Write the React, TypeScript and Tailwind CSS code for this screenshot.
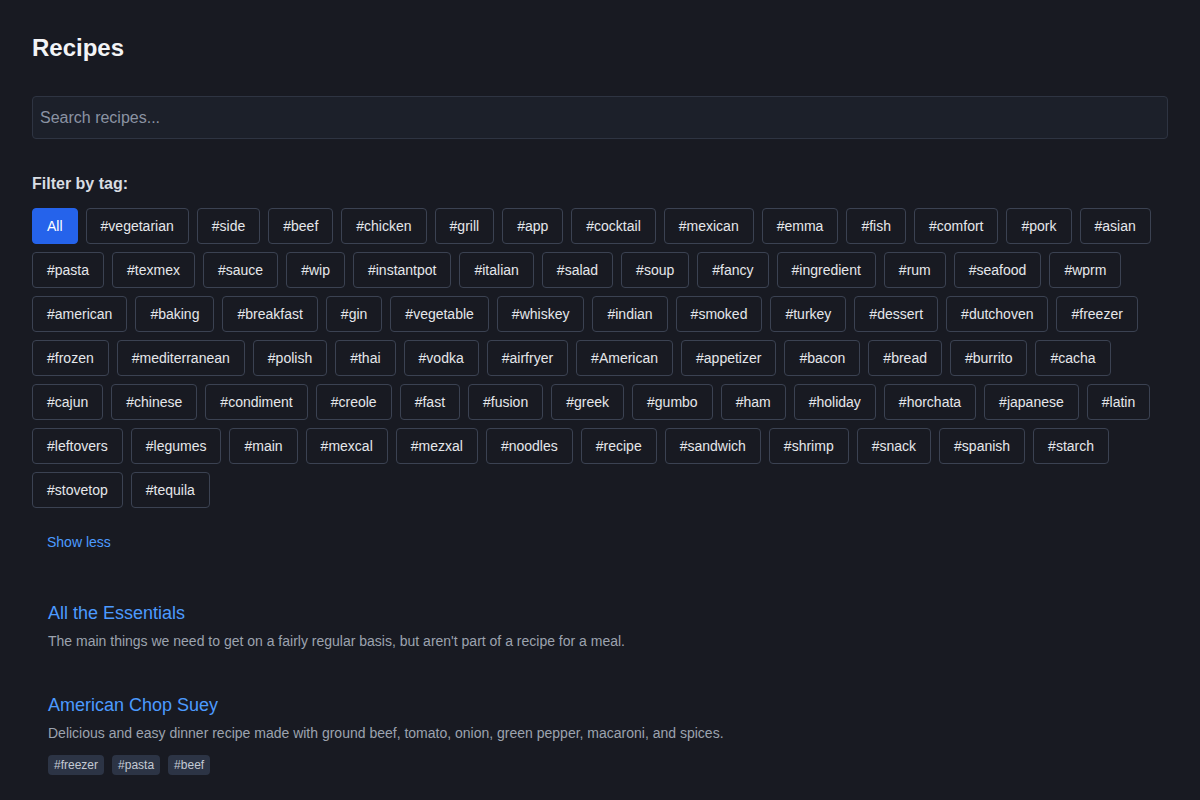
import React from "react";

const tags = [
  "vegetarian", "side", "beef", "chicken", "grill", "app", "cocktail", "mexican", "emma", "fish", "comfort", "pork", "asian",
  "pasta", "texmex", "sauce", "wip", "instantpot", "italian", "salad", "soup", "fancy", "ingredient", "rum", "seafood", "wprm",
  "american", "baking", "breakfast", "gin", "vegetable", "whiskey", "indian", "smoked", "turkey", "dessert", "dutchoven", "freezer",
  "frozen", "mediterranean", "polish", "thai", "vodka", "airfryer", "American", "appetizer", "bacon", "bread", "burrito", "cacha",
  "cajun", "chinese", "condiment", "creole", "fast", "fusion", "greek", "gumbo", "ham", "holiday", "horchata", "japanese", "latin",
  "leftovers", "legumes", "main", "mexcal", "mezxal", "noodles", "recipe", "sandwich", "shrimp", "snack", "spanish", "starch",
  "stovetop", "tequila",
];

const recipes = [
  {
    title: "All the Essentials",
    description: "The main things we need to get on a fairly regular basis, but aren't part of a recipe for a meal.",
    tags: [] as string[],
  },
  {
    title: "American Chop Suey",
    description: "Delicious and easy dinner recipe made with ground beef, tomato, onion, green pepper, macaroni, and spices.",
    tags: ["freezer", "pasta", "beef"],
  },
];

function App() {
  return (
    <div className="min-h-screen bg-[#181a22] px-8 pt-8 font-['Liberation_Sans',Arial,sans-serif] text-[#e5e7eb]">
      <h1 className="text-2xl font-bold text-[#f3f4f6]">Recipes</h1>

      <input
        type="text"
        placeholder="Search recipes..."
        className="mt-8 h-[43px] w-full rounded border border-[#2e3442] bg-[#1c202a] px-[7px] text-base text-[#e5e7eb] placeholder:text-[#8b93a3] outline-none"
      />

      <div className="mt-[33px] text-base font-bold text-[#d9dde3]">Filter by tag:</div>
      <div className="mt-3 flex flex-wrap gap-2">
        <button className="h-9 rounded border border-[#2563eb] bg-[#2563eb] px-[14px] text-sm text-white">
          All
        </button>
        {tags.map((t) => (
          <button
            key={t}
            className="h-9 rounded border border-[#3b4252] bg-transparent px-[14px] text-sm text-[#e5e7eb]"
          >
            #{t}
          </button>
        ))}
      </div>

      <button className="mt-4 px-[15px] py-2 text-sm text-[#4c9aff]">Show less</button>

      <div className="mt-[23px] flex flex-col gap-2">
        {recipes.map((r) => (
          <div key={r.title} className="p-4">
            <div className="text-lg text-[#4c9aff]">{r.title}</div>
            <div className="mt-1 text-sm text-[#9ca3af]">{r.description}</div>
            {r.tags.length > 0 && (
              <div className="mt-3 flex gap-2">
                {r.tags.map((t) => (
                  <span
                    key={t}
                    className="rounded bg-[#2c3445] px-[6px] py-[2px] text-xs leading-4 text-[#c4cad4]"
                  >
                    #{t}
                  </span>
                ))}
              </div>
            )}
          </div>
        ))}
      </div>
    </div>
  );
}

export default App;
